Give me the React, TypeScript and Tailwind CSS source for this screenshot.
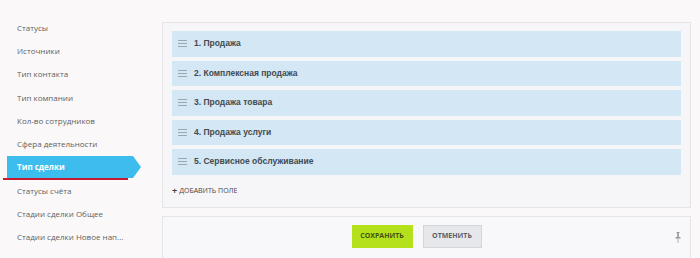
import React from "react";

const menu = [
  "Статусы",
  "Источники",
  "Тип контакта",
  "Тип компании",
  "Кол-во сотрудников",
  "Сфера деятельности",
  "Тип сделки",
  "Статусы счёта",
  "Стадии сделки Общее",
  "Стадии сделки Новое нап...",
  "Этапы",
];

const rows = [
  "1. Продажа",
  "2. Комплексная продажа",
  "3. Продажа товара",
  "4. Продажа услуги",
  "5. Сервисное обслуживание",
];

function Grip() {
  return (
    <svg width="9" height="7" viewBox="0 0 9 7" className="shrink-0">
      <rect x="0" y="0" width="9" height="1" fill="#9aa8b2" />
      <rect x="0" y="3" width="9" height="1" fill="#9aa8b2" />
      <rect x="0" y="6" width="9" height="1" fill="#9aa8b2" />
    </svg>
  );
}

function Pin() {
  return (
    <svg width="6" height="11" viewBox="0 0 6 11">
      <rect x="1.5" y="0" width="3" height="1" fill="#9a9a9a" />
      <rect x="2" y="1" width="2" height="4" fill="#a8a8a8" />
      <rect x="0.5" y="5" width="5" height="1.5" fill="#9a9a9a" />
      <rect x="2.6" y="6.5" width="0.8" height="4.5" fill="#a0a0a0" />
    </svg>
  );
}

export default function App() {
  return (
    <div className="flex h-[258px] w-[700px] overflow-hidden bg-[#faf8f9] font-['Open_Sans',sans-serif]">
      <aside className="w-[162px] shrink-0 pt-[16px]">
        {menu.map((m) =>
          m === "Тип сделки" ? (
            <div key={m} className="relative flex h-[23.3px] items-center">
              <div className="relative ml-[7px] flex h-[22px] w-[126px] items-center bg-[#3dbdee] pl-[10px] text-[8px] font-bold text-white">
                {m}
                <div className="absolute right-[-8px] top-0 h-0 w-0 border-y-[11px] border-l-[8px] border-y-transparent border-l-[#3dbdee]" />
              </div>
              <div className="absolute left-[3px] top-[22px] h-[2px] w-[125px] bg-[#c8192e]" />
            </div>
          ) : (
            <div key={m} className="flex h-[23.3px] items-center whitespace-nowrap pl-[17px] text-[8px] text-[#5f5f5f]">
              {m}
            </div>
          )
        )}
      </aside>
      <main className="flex w-[529px] flex-col pt-[22px]">
        <section className="h-[186px] shrink-0 border border-[#e6e4e7] bg-[#f6f6f9] px-[9px] pt-[8px]">
          <div className="flex flex-col gap-[4px]">
            {rows.map((r) => (
              <div key={r} className="flex h-[25.5px] items-center gap-[7px] bg-[#d3e7f4] pl-[6px] font-['Liberation_Sans',sans-serif] text-[8.5px] font-bold text-[#444a50]">
                <Grip />
                {r}
              </div>
            ))}
          </div>
          <div className="mt-[11px] flex items-center text-[7px] uppercase text-[#444]">
            <span className="mr-[2px] text-[9px] font-bold leading-none">+</span>Добавить поле
          </div>
        </section>
        <section className="relative mt-[8px] flex h-[50px] shrink-0 justify-center border border-[#e6e4e7] bg-[#f8f8fa] pr-[20px] pt-[8px]">
          <div className="flex h-[23px] gap-[10px]">
            <button className="w-[61px] bg-[#b5e01c] text-[7px] font-bold text-[#44540c]">СОХРАНИТЬ</button>
            <button className="w-[59px] border border-[#d4d5da] bg-[#e6e7eb] text-[7px] font-bold text-[#5d6068]">ОТМЕНИТЬ</button>
          </div>
          <div className="absolute right-[9px] top-[15px]">
            <Pin />
          </div>
        </section>
      </main>
    </div>
  );
}
